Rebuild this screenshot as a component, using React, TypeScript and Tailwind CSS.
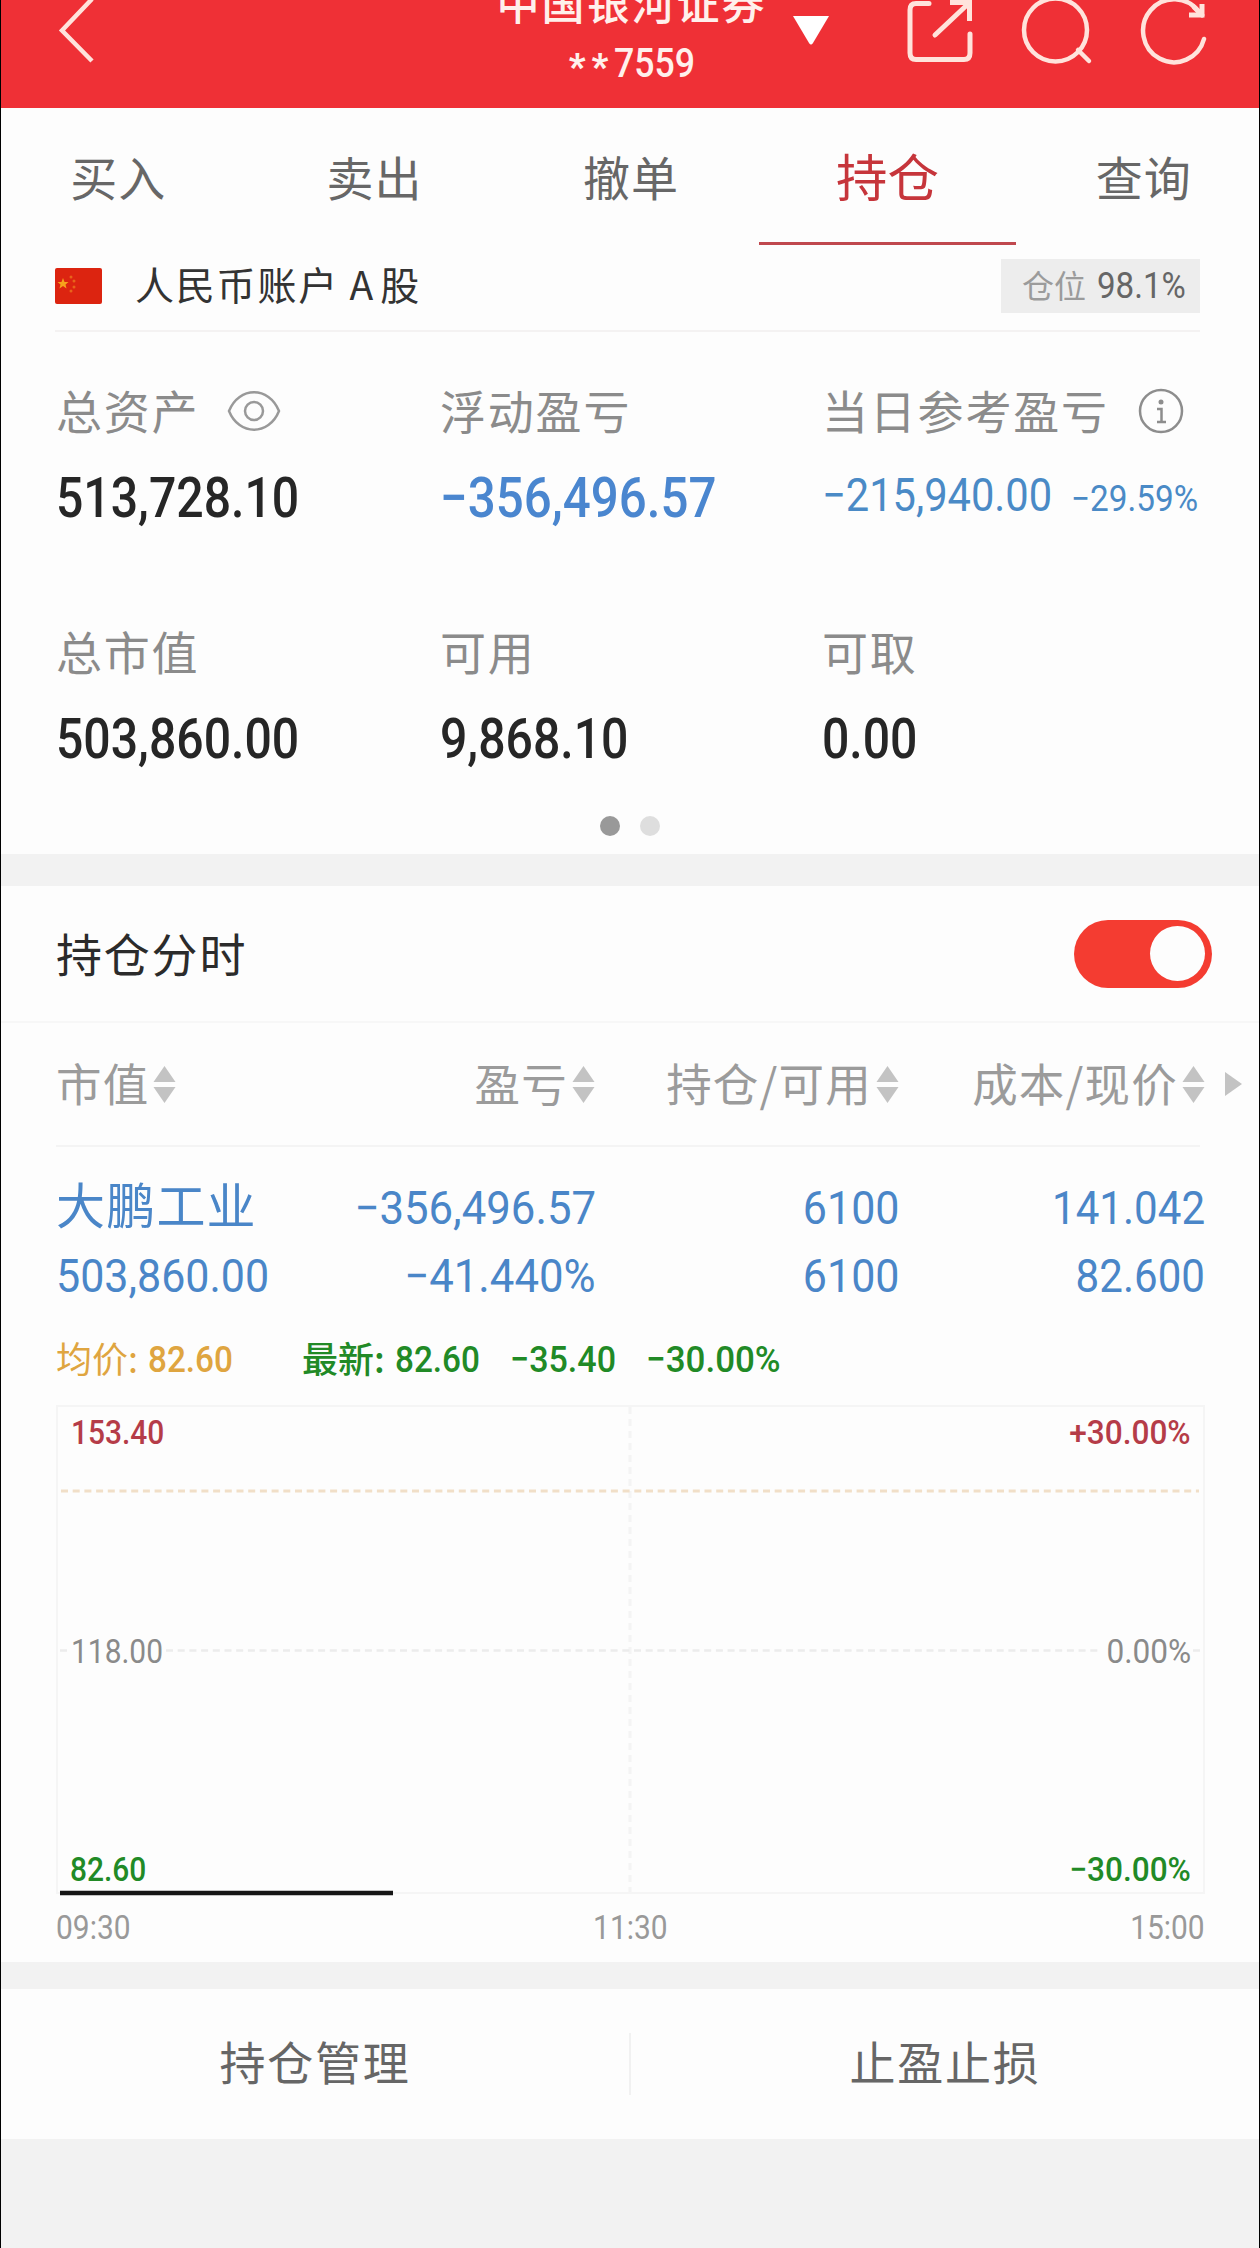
import React from "react";

const tabs = ["买入", "卖出", "撤单", "持仓", "查询"];

const columns = ["市值", "盈亏", "持仓/可用", "成本/现价"];

const holding = [
  { lines: ["-356,496.57", "-41.440%"], stretch: "scale-x-[0.94]" },
  { lines: ["6100", "6100"], stretch: "scale-x-[0.925]" },
  { lines: ["141.042", "82.600"], stretch: "scale-x-[0.905]" },
];

// Condensed digits: Roboto squeezed horizontally towards its anchor side
function Num({ children, className = "" }: { children: string; className?: string }) {
  return (
    <span className={`inline-block whitespace-nowrap font-[Roboto,sans-serif] leading-none ${className}`}>
      {children.replace("-", "−")}
    </span>
  );
}

function SortIcon() {
  return (
    <svg width="23" height="38" viewBox="0 0 23 38" className="mt-0.5 shrink-0" fill="#c3c3c3">
      <path d="M11.5 1 L22.5 17 H0.5 Z" />
      <path d="M11.5 38 L22.5 22 H0.5 Z" />
    </svg>
  );
}

function Header() {
  return (
    <header className="flex h-[108px] items-start bg-[#ef3036] text-[#fff0ec]">
      <svg width="42" height="66" viewBox="0 0 42 66" className="ml-[54px]" fill="none" stroke="#ffe3dc" strokeWidth="4.5">
        <path d="M37 -1 L7 30.5 L37 61" />
      </svg>
      <div className="ml-[383px] flex w-[300px] flex-col items-center">
        <div className="-mt-[20px] ml-[3px] text-[43px] font-medium leading-none tracking-[2px]">中国银河证券</div>
        <div className="mt-[18px] ml-1.5 flex items-center">
          <span className="mt-2 font-[Roboto,sans-serif] text-[36px] font-black leading-none tracking-[6px]">**</span>
          <Num className="-mr-2.5 origin-left scale-x-[0.87] text-[41px] font-medium">7559</Num>
        </div>
      </div>
      <svg width="38" height="30" viewBox="0 0 38 30" className="mt-[15px] ml-[12px]" fill="#fff">
        <path d="M1 1 H37 L21 28 Q19 31 17 28 Z" />
      </svg>
      <svg width="72" height="66" viewBox="0 0 72 66" className="ml-[74px]" fill="none" stroke="#ffe3dc" strokeWidth="5" strokeLinecap="round">
        <path d="M25 3.5 H12 Q6 3.5 6 10 V53 Q6 59.5 12 59.5 H60 Q66 59.5 66 53 V34" />
        <path d="M31 35 L64 4" />
        <path d="M46 2.5 H65.5 V21" strokeLinecap="butt" />
      </svg>
      <svg width="76" height="66" viewBox="0 0 76 66" className="ml-[43px]" fill="none" stroke="#ffe3dc" strokeWidth="4.5" strokeLinecap="round">
        <circle cx="36.5" cy="30" r="31.5" />
        <path d="M59 50 L70 61" />
      </svg>
      <svg width="72" height="66" viewBox="0 0 72 66" className="ml-[43px]" fill="none" stroke="#ffe3dc" strokeWidth="4.5" strokeLinecap="round">
        <path d="M66 39 A31 31.5 0 1 1 61 12" />
        <path d="M51 15 H64 V4" strokeLinecap="butt" strokeWidth="5" />
        <path d="M56 7 L64 15" strokeWidth="5" />
      </svg>
    </header>
  );
}

function Tabs() {
  return (
    <nav className="-mr-[13px] -ml-[11px] grid h-[137px] grid-cols-5">
      {tabs.map((tab) =>
        tab === "持仓" ? (
          <div key={tab} className="flex items-center justify-center border-b-[3px] border-[#c0484e] text-[51.5px] leading-none text-[#c6353b]">
            {tab}
          </div>
        ) : (
          <div key={tab} className="flex items-center justify-center border-b-[3px] border-transparent text-[47px] leading-none tracking-[1px] text-[#676767]">
            {tab}
          </div>
        )
      )}
    </nav>
  );
}

function AccountBar() {
  return (
    <div className="mr-[59px] ml-[54px] flex h-[87px] items-center border-b-2 border-[#f4f2f2] pb-1">
      <svg width="47" height="36" viewBox="0 0 47 36">
        <rect width="47" height="36" rx="2" fill="#dc2410" />
        <path d="M8 10 L9.5 14 L13.5 14 L10.5 16.5 L11.5 20.5 L8 18 L4.5 20.5 L5.5 16.5 L2.5 14 L6.5 14 Z" fill="#f6a21c" />
        <g fill="#e8641a">
          <circle cx="16" cy="9" r="1.5" />
          <circle cx="19" cy="13" r="1.5" />
          <circle cx="19" cy="19" r="1.5" />
          <circle cx="16" cy="23" r="1.5" />
        </g>
      </svg>
      <div className="-mt-1 ml-[33px] text-[39px] leading-none tracking-[1.8px] whitespace-pre text-[#333]">
        人民币账户 <span className="tracking-[7px]">A</span>股
      </div>
      <div className="ml-auto flex h-[54px] w-[199px] items-center bg-[#ededed] pl-[21px]">
        <span className="-mt-1 text-[32px] leading-none text-[#9b9b9b]">仓位</span>
        <Num className="ml-[11px] origin-left scale-x-[0.92] text-[36px] text-[#666]">98.1%</Num>
      </div>
    </div>
  );
}

function Metric({ label, icon, children }: { label: string; icon?: React.ReactNode; children: React.ReactNode }) {
  return (
    <div>
      <div className="flex h-12 items-center whitespace-nowrap text-[46px] leading-none tracking-[1.8px] text-[#8b8b8b]">
        {label}
        {icon}
      </div>
      <div className="mt-[35px] flex h-[60px] items-center">{children}</div>
    </div>
  );
}

function Summary() {
  const big = "origin-left scale-x-[0.86] text-[56px] font-medium text-[#262626]";
  return (
    <section className="h-[522px] pt-[53px] pl-[55px]">
      <div className="grid grid-cols-[384px_382px_1fr] gap-y-[98px]">
        <Metric
          label="总资产"
          icon={
            <svg width="54" height="42" viewBox="0 0 54 42" className="mt-1 ml-[28px]" fill="none" stroke="#999" strokeWidth="2.5">
              <path d="M2 21 C12 -4 42 -4 52 21 C42 46 12 46 2 21 Z" />
              <circle cx="27" cy="21" r="9" />
            </svg>
          }
        >
          <Num className={big}>513,728.10</Num>
        </Metric>
        <Metric label="浮动盈亏">
          <Num className="origin-left scale-x-[0.88] text-[56px] font-medium text-[#4a86cf]">-356,496.57</Num>
        </Metric>
        <Metric
          label="当日参考盈亏"
          icon={
            <svg width="46" height="46" viewBox="0 0 46 46" className="mt-1 ml-[29px]" fill="none" stroke="#8d8d8d" strokeWidth="2.5">
              <circle cx="23" cy="23" r="21" />
              <circle cx="23" cy="14" r="2.5" fill="#8d8d8d" stroke="none" />
              <path d="M19 21 H23.5 V34 M19 34 H28" />
            </svg>
          }
        >
          <Num className="-mt-1.5 w-[249px] origin-left scale-x-[0.905] text-[46px] text-[#4a8ac6]">-215,940.00</Num>
          <Num className="mt-0.5 origin-left scale-x-[0.925] text-[36px] text-[#4a8ac6]">-29.59%</Num>
        </Metric>
        <Metric label="总市值">
          <Num className={big}>503,860.00</Num>
        </Metric>
        <Metric label="可用">
          <Num className={big}>9,868.10</Num>
        </Metric>
        <Metric label="可取">
          <Num className={big}>0.00</Num>
        </Metric>
      </div>
      <div className="mt-[47px] ml-[544px] flex gap-5">
        <span className="size-5 rounded-full bg-[#999]" />
        <span className="size-5 rounded-full bg-[#dedede]" />
      </div>
    </section>
  );
}

function Holdings() {
  return (
    <section className="h-[1076px]">
      <div className="flex h-[137px] items-center justify-between border-b-2 border-[#f7f7f7] pr-[47px] pl-[55px]">
        <span className="-mt-1 text-[46px] leading-none tracking-[1.8px] text-[#2b2b2b]">持仓分时</span>
        <div className="flex h-[68px] w-[138px] items-center justify-end rounded-full bg-[#f43c31] pr-[7px]">
          <span className="size-[55px] rounded-full bg-[#fdfdfd]" />
        </div>
      </div>

      <div className="flex h-[122px] items-center pb-[3px] pl-[55px]">
        <div className="grid grid-cols-[238px_301px_304px_306px]">
          {columns.map((col, idx) => (
            <div
              key={col}
              className={`flex items-center gap-1 whitespace-nowrap text-[45.5px] leading-none tracking-[1.2px] text-[#9b9b9b] ${idx === 0 ? "" : "justify-end"}`}
            >
              {col}
              <SortIcon />
            </div>
          ))}
        </div>
        <svg width="17" height="24" viewBox="0 0 17 24" className="mt-0.5 ml-[20px]" fill="#c3c3c3">
          <path d="M0 0 L17 12 L0 24 Z" />
        </svg>
      </div>
      <div className="mr-[59px] ml-[55px] h-0.5 bg-[#f4f4f4]" />

      <div className="grid h-[164px] grid-cols-[238px_302px_304px_305px] pl-[55px] text-[#4a86c8]">
        <div className="pt-[31px]">
          <div className="h-[65px] text-[49px] leading-none tracking-[1.2px] whitespace-nowrap">大鹏工业</div>
          <Num className="mt-[10px] block origin-left scale-x-[0.925] text-[46.5px]">503,860.00</Num>
        </div>
        {holding.map(({ lines, stretch }, idx) => (
          <div key={idx} className="flex flex-col items-end gap-[21px] pt-[38px]">
            {lines.map((line, i) => (
              <Num key={i} className={`origin-right text-[46.5px] ${stretch}`}>
                {line}
              </Num>
            ))}
          </div>
        ))}
      </div>

      <div className="flex h-[94px] items-center pt-[3px] pl-[55px] text-[37px] leading-none">
        <span className="-mt-1.5 w-[92px] whitespace-nowrap text-[36px] text-[#dfa540]">均价:</span>
        <Num className="w-[154px] origin-left scale-x-[0.9] font-medium text-[#dfa540]">82.60</Num>
        <span className="-mt-1.5 w-[93px] whitespace-nowrap text-[36px] font-medium text-[#218a26]">最新:</span>
        <Num className="w-[115px] origin-left scale-x-[0.9] font-medium text-[#218a26]">82.60</Num>
        <Num className="w-[136px] origin-left scale-x-[0.92] font-medium text-[#218a26]">-35.40</Num>
        <Num className="origin-left scale-x-[0.945] font-medium text-[#218a26]">-30.00%</Num>
      </div>

      <Chart />
    </section>
  );
}

function Chart() {
  const left = "origin-left scale-x-[0.88]";
  const right = "origin-right scale-x-[0.93]";
  return (
    <div className="mr-[54px] ml-[55px]">
      <div className="relative flex h-[490px] flex-col justify-between pt-[10px] pr-[14px] pb-[9px] pl-[14px] text-[34px]">
        <svg width="1149" height="492" viewBox="0 0 1149 492" className="absolute top-0 left-0" fill="none">
          <rect x="1" y="1" width="1147" height="487" stroke="#f5f5f5" strokeWidth="2" />
          <path d="M574 2 V487" stroke="#f4f4f4" strokeWidth="3" strokeDasharray="7 5" />
          <path d="M5 86 H1143" stroke="#f1dfc8" strokeWidth="3" strokeDasharray="7 4.7" />
          <path d="M4 245.5 H14 M110 245.5 H1044 M1137 245.5 H1147" stroke="#ececec" strokeWidth="2.5" strokeDasharray="7 4.7" />
          <path d="M4 488 H337" stroke="#161616" strokeWidth="4.5" />
        </svg>
        <div className="flex justify-between font-medium text-[#b53c48]">
          <Num className={`ml-px ${left}`}>153.40</Num>
          <Num className={right}>+30.00%</Num>
        </div>
        <div className="flex justify-between text-[#8a8a8a]">
          <Num className={`ml-px ${left}`}>118.00</Num>
          <Num className={right}>0.00%</Num>
        </div>
        <div className="flex justify-between font-medium text-[#218a26]">
          <Num className={left}>82.60</Num>
          <Num className={right}>-30.00%</Num>
        </div>
      </div>
      <div className="mt-[15px] flex justify-between text-[34px] text-[#999]">
        <Num className={left}>09:30</Num>
        <Num className="scale-x-[0.88]">11:30</Num>
        <Num className="origin-right scale-x-[0.88]">15:00</Num>
      </div>
    </div>
  );
}

export default function App() {
  return (
    <div className="h-[2248px] w-[1260px] overflow-hidden border-x border-black bg-[#f2f2f2] font-['Noto_Sans_CJK_SC',sans-serif]">
      <div className="bg-[#fdfdfd]">
        <Header />
        <Tabs />
        <AccountBar />
        <Summary />
      </div>
      <div className="mt-[32px] bg-[#fdfdfd]">
        <Holdings />
      </div>
      <div className="mt-[27px] grid h-[150px] grid-cols-[628px_630px] bg-[#fdfdfd] text-[46px] tracking-[1.8px] text-[#666]">
        <div className="flex items-center justify-center pb-2 leading-none">持仓管理</div>
        <div className="flex items-center">
          <span className="h-[62px] w-0.5 bg-[#f1f1f1]" />
          <span className="flex-1 pb-2 text-center leading-none">止盈止损</span>
        </div>
      </div>
    </div>
  );
}
